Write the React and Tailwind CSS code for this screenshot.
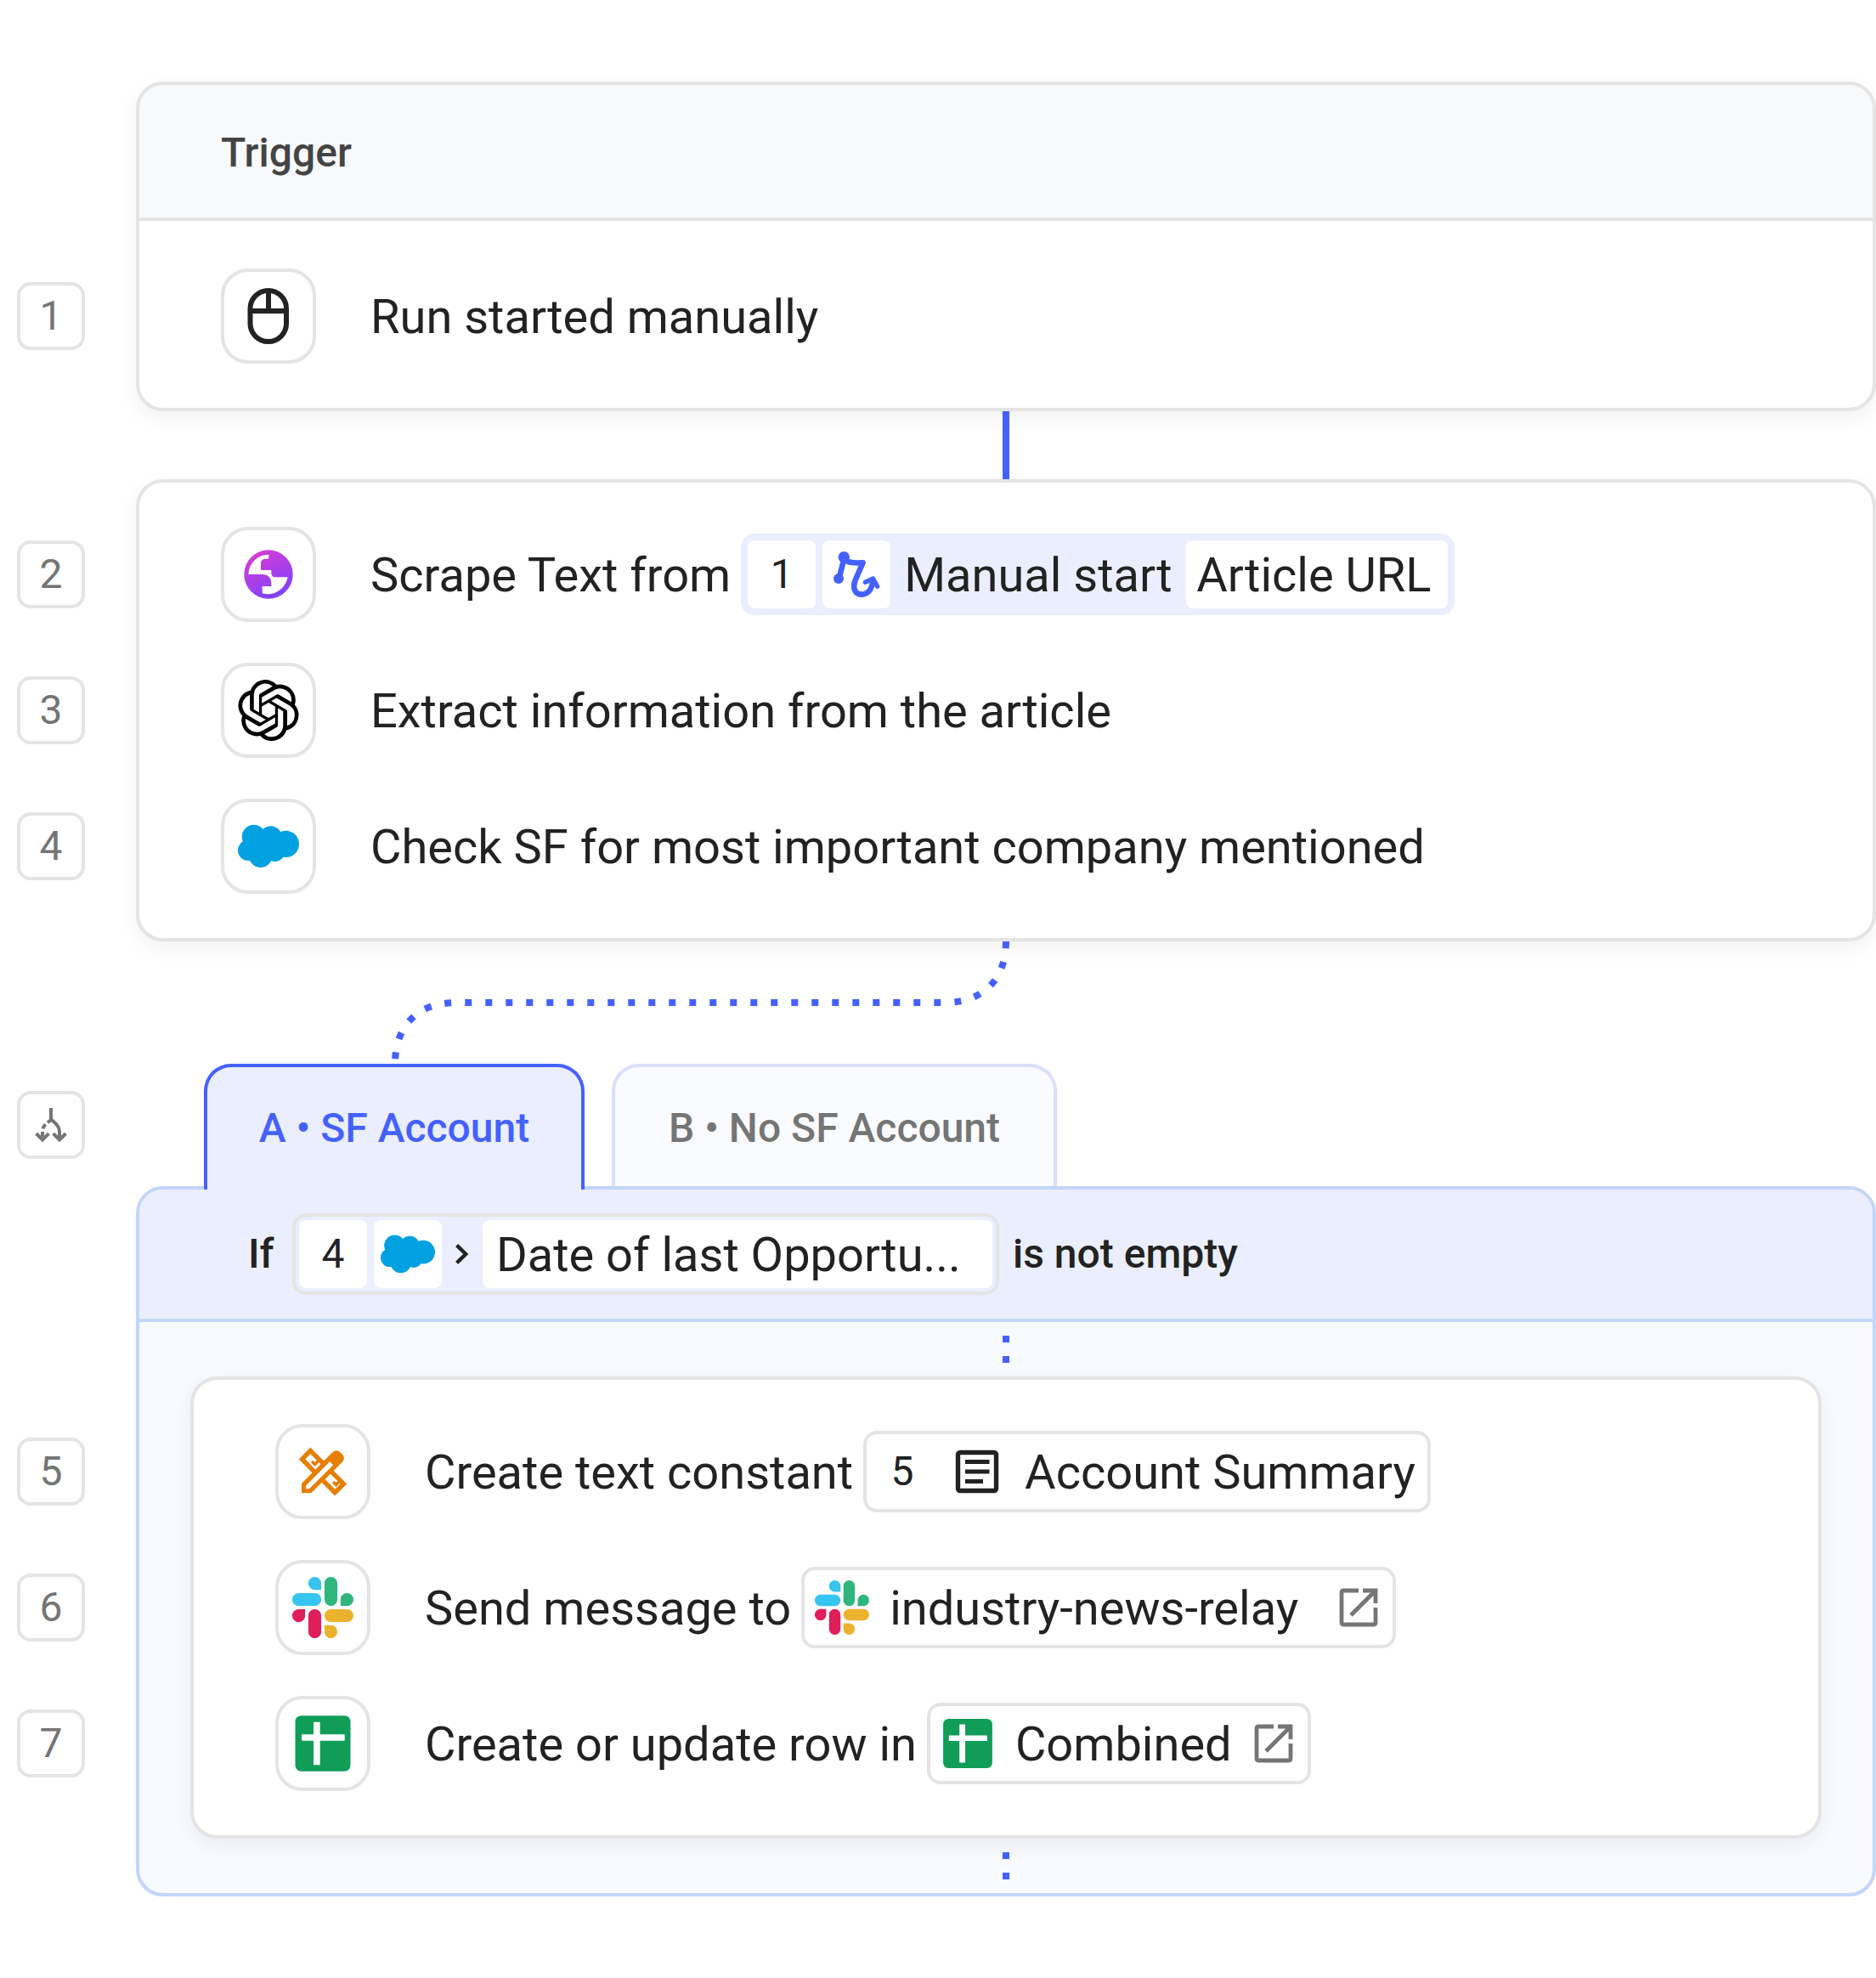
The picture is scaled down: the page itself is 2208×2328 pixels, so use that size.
import { SiOpenai } from "react-icons/si";

function MouseIcon() {
  return (
    <svg viewBox="0 0 72 72" className="size-18" fill="none" stroke="#222222" strokeWidth="6">
      <rect x="14.5" y="6" width="42.5" height="60" rx="21.25" />
      <path d="M14.5 30h42.5M36 6v24" />
    </svg>
  )
}

function GlobeIcon() {
  return (
    <svg viewBox="0 0 72 72" className="size-18">
      <defs>
        <linearGradient id="globe" x1="20" y1="6" x2="50" y2="66" gradientUnits="userSpaceOnUse">
          <stop offset="0" stopColor="#dc3bd3" />
          <stop offset="1" stopColor="#7643ff" />
        </linearGradient>
      </defs>
      <circle cx="36" cy="36" r="28.7" fill="url(#globe)" />
      <path
        fill="#ffffff"
        d="M36.7 12.7A24 24 0 0 0 12.3 36H29C35.5 36 39.3 40.5 39.3 46V50H28.7V58.3A24 24 0 0 0 58.7 39.3H44C41 39.3 39.3 37 39.3 34V31H27V23C27 20 29 17.7 32 17.7H36C36.3 16 36 14.5 36.7 12.7Z"
      />
    </svg>
  )
}

function CloudIcon({ className }) {
  return (
    <svg viewBox="0 0 72 72" className={className} fill="#00a1e0">
      <circle cx="18.7" cy="24.8" r="14" />
      <circle cx="12.2" cy="40.8" r="12.2" />
      <circle cx="26.7" cy="47.4" r="13.6" />
      <circle cx="43.6" cy="42.4" r="11.6" />
      <circle cx="38.6" cy="25.4" r="13.2" />
      <circle cx="56.4" cy="33.4" r="15.6" />
      <path d="M12 26h44v14H12z" />
    </svg>
  )
}

function ToolsIcon() {
  return (
    <svg viewBox="0 0 72 72" className="size-18">
      <path d="M21.3 11.3L11.5 21.5L50.2 60.7L60.4 50.4Z" fill="#ffffff" stroke="#e67e00" strokeWidth="5.4" />
      <path
        d="M32.5 21.5l-6 6-3.4-3.4M57.5 45.5l-6 6-3.4-3.4"
        fill="none"
        stroke="#e67e00"
        strokeWidth="3.6"
      />
      <path
        d="M11 61.3V50L46.6 14Q51.7 9 56.6 13.4L58.8 15.6Q63.4 20.6 58.3 25.3L22.3 61.3Z"
        fill="#e67e00"
      />
      <path d="M16 56.3V52.4L44.2 24.2L48.2 28.2L20 56.3Z" fill="#ffffff" />
    </svg>
  )
}

function SlackIcon({ className }) {
  return (
    <svg viewBox="0 0 122.8 122.8" className={className}>
      <path
        fill="#e01e5a"
        d="M25.8 77.6c0 7.1-5.8 12.9-12.9 12.9S0 84.7 0 77.6s5.8-12.9 12.9-12.9h12.9v12.9zm6.5 0c0-7.1 5.8-12.9 12.9-12.9s12.9 5.8 12.9 12.9v32.3c0 7.1-5.8 12.9-12.9 12.9s-12.9-5.8-12.9-12.9V77.6z"
      />
      <path
        fill="#36c5f0"
        d="M45.2 25.8c-7.1 0-12.9-5.8-12.9-12.9S38.1 0 45.2 0s12.9 5.8 12.9 12.9v12.9H45.2zm0 6.5c7.1 0 12.9 5.8 12.9 12.9s-5.8 12.9-12.9 12.9H12.9C5.8 58.1 0 52.3 0 45.2s5.8-12.9 12.9-12.9h32.3z"
      />
      <path
        fill="#2eb67d"
        d="M97 45.2c0-7.1 5.8-12.9 12.9-12.9s12.9 5.8 12.9 12.9-5.8 12.9-12.9 12.9H97V45.2zm-6.5 0c0 7.1-5.8 12.9-12.9 12.9s-12.9-5.8-12.9-12.9V12.9C64.7 5.8 70.5 0 77.6 0s12.9 5.8 12.9 12.9v32.3z"
      />
      <path
        fill="#ecb22e"
        d="M77.6 97c7.1 0 12.9 5.8 12.9 12.9s-5.8 12.9-12.9 12.9-12.9-5.8-12.9-12.9V97h12.9zm0-6.5c-7.1 0-12.9-5.8-12.9-12.9s5.8-12.9 12.9-12.9h32.3c7.1 0 12.9 5.8 12.9 12.9s-5.8 12.9-12.9 12.9H77.6z"
      />
    </svg>
  )
}

function SheetIcon({ className }) {
  return (
    <svg viewBox="0 0 72 72" className={className}>
      <rect x="3.5" y="3.3" width="65" height="65.4" rx="7" fill="#0f9d58" />
      <path d="M25 10.7h7.7v50.6H25zM11 25.3h50.7v7.4H11z" fill="#ffffff" />
    </svg>
  )
}

function ManualStartIcon() {
  return (
    <svg viewBox="0 0 72 72" className="size-18" fill="none" stroke="#4461ff" strokeWidth="6.6" strokeLinecap="round" strokeLinejoin="round">
      <circle cx="21.3" cy="15.7" r="6.7" fill="#4461ff" stroke="none" />
      <circle cx="15" cy="41" r="6" fill="#4461ff" stroke="none" />
      <path d="M15.5 41L21.3 18C27 23 34 22.6 43.6 22.3L35 42C31 52 34 59.6 42 59.6C50.5 59.6 55 52 55 43" />
      <path d="M46.4 45.2L55.6 41L60.6 50.2" strokeWidth="5.4" />
    </svg>
  )
}

function ListIcon() {
  return (
    <svg viewBox="0 0 64 64" className="size-16" fill="none" stroke="#222222" strokeWidth="5.4">
      <rect x="9.5" y="9.5" width="45" height="45" rx="2.5" />
      <path d="M18 20.5h28.5M18 32h28.5M18 43.5h21" strokeWidth="4.8" />
    </svg>
  )
}

function ExternalIcon() {
  return (
    <svg viewBox="0 0 48 48" className="size-12 shrink-0" fill="none" stroke="#757575" strokeWidth="4.8">
      <path d="M24 4H6.5Q4 4 4 6.5V41.5Q4 44 6.5 44H41.5Q44 44 44 41.5V24" />
      <path d="M29 4H44V19M15 33L44 4" />
    </svg>
  )
}

function BranchIcon() {
  return (
    <svg viewBox="0 0 48 48" className="size-12" fill="none" stroke="#757575" strokeWidth="4">
      <path d="M24 4V16C24 20 34 22 34 32V41" />
      <path d="M28 35.5l6 6 6-6M8 35.5l6 6 6-6" strokeLinecap="square" />
      <path d="M24 18C19.5 22 14 24 14 33V41" strokeDasharray="6 3.5" strokeDashoffset="1" />
    </svg>
  )
}

function StepNumber({ children }) {
  return (
    <div className="flex h-28 items-center">
      <span className="flex size-20 items-center justify-center rounded-2xl border-4 border-[#e4e4e4] text-[48px] leading-none text-[#757575]">
        {children}
      </span>
    </div>
  )
}

function Step({ icon, children }) {
  return (
    <li className="flex items-center gap-16">
      <div className="flex size-28 shrink-0 items-center justify-center rounded-[32px] border-4 border-[#e4e4e4] bg-white">
        {icon}
      </div>
      <div className="flex items-center gap-3 whitespace-nowrap text-[56px] leading-none">{children}</div>
    </li>
  )
}

function Label({ children }) {
  return <span className="pt-0.5">{children}</span>
}

function Cell({ children }) {
  return (
    <span className="flex size-20 shrink-0 items-center justify-center rounded-lg bg-white text-[48px]">
      {children}
    </span>
  )
}

function Card({ children }) {
  return (
    <div className="overflow-hidden rounded-[32px] border-4 border-[#e4e4e4] bg-white shadow-[0_8px_24px_rgba(0,0,0,0.055)]">
      {children}
    </div>
  )
}

function Dots() {
  return (
    <div className="flex h-16 flex-col items-center gap-4 pt-4">
      <span className="size-2 bg-[#4461ff]" />
      <span className="size-2 bg-[#4461ff]" />
    </div>
  )
}

export default function App() {
  return (
    <main className="bg-white pt-24 pb-24 font-['Roboto',sans-serif] text-[#222222]">
      {/* Trigger */}
      <section className="flex">
        <div className="w-40 shrink-0 pt-[220px] pl-5">
          <StepNumber>1</StepNumber>
        </div>
        <div className="flex-1">
          <Card>
            <h2 className="flex h-40 items-center border-b-4 border-[#e4e4e4] bg-[#f8f9fb] px-24 pt-1 text-[48px] leading-none font-medium text-[#444444]">
              Trigger
            </h2>
            <ul className="px-24 pt-14 pb-[52px]">
              <Step icon={<MouseIcon />}>
                <Label>Run started manually</Label>
              </Step>
            </ul>
          </Card>
          <div className="mx-auto h-20 w-2 bg-[#4461ff]" />
        </div>
      </section>

      {/* Actions */}
      <section className="flex">
        <div className="flex w-40 shrink-0 flex-col gap-12 pt-14 pl-5">
          <StepNumber>2</StepNumber>
          <StepNumber>3</StepNumber>
          <StepNumber>4</StepNumber>
        </div>
        <div className="flex-1">
          <Card>
            <ul className="flex flex-col gap-12 px-24 py-[52px]">
              <Step icon={<GlobeIcon />}>
                <Label>Scrape Text from</Label>
                <span className="flex items-center gap-2 rounded-2xl bg-[#ebeefe] p-2">
                  <Cell>1</Cell>
                  <Cell><ManualStartIcon /></Cell>
                  <span className="min-w-[332px] px-2 pt-0.5">Manual start</span>
                  <span className="flex h-20 min-w-[308px] items-center rounded-lg bg-white px-3 pt-0.5">Article URL</span>
                </span>
              </Step>
              <Step icon={<SiOpenai className="size-18 text-black" />}>
                <Label>Extract information from the article</Label>
              </Step>
              <Step icon={<CloudIcon className="size-18" />}>
                <Label>Check SF for most important company mentioned</Label>
              </Step>
            </ul>
          </Card>
          <svg viewBox="0 0 2048 144" className="block w-full" fill="none" stroke="#4461ff" strokeWidth="8" strokeDasharray="8 16">
            <path d="M1024 0C1024 45 997 72 952 72H377C332 72 305 99 305 144" />
          </svg>
        </div>
      </section>

      {/* Branches */}
      <section className="flex">
        <div className="w-40 shrink-0 pl-5">
          <div className="flex h-36 items-center">
            <span className="flex size-20 items-center justify-center rounded-2xl border-4 border-[#e4e4e4]">
              <BranchIcon />
            </span>
          </div>
          <div className="flex flex-col gap-12 pt-[280px]">
            <StepNumber>5</StepNumber>
            <StepNumber>6</StepNumber>
            <StepNumber>7</StepNumber>
          </div>
        </div>
        <div className="flex-1">
          <div role="tablist" className="flex h-36 gap-8 pl-20 text-[48px] leading-none font-medium">
            <button
              type="button"
              role="tab"
              aria-selected="true"
              className="relative z-10 -mb-1 min-w-[448px] rounded-t-[32px] border-4 border-b-0 border-[#4461ff] bg-[#ebeefe] text-[#4461ff]"
            >
              A • SF Account
            </button>
            <button
              type="button"
              role="tab"
              aria-selected="false"
              className="min-w-[524px] rounded-t-[32px] border-4 border-b-0 border-[#d9dfff] bg-[#fafbff] pt-1 text-[#757575]"
            >
              B • No SF Account
            </button>
          </div>
          <div className="overflow-hidden rounded-[32px] border-4 border-[#c3d5fa] bg-[#f7faff]">
            <div className="flex h-39 items-center gap-4 border-b-4 border-[#c3d5fa] bg-[#ebeefe] px-32 text-[48px] leading-none font-medium whitespace-nowrap">
              <span className="w-9">If</span>
              <span className="flex items-center gap-2 rounded-2xl border-4 border-[#e4e4e4] p-1 font-normal">
                <Cell>4</Cell>
                <Cell><CloudIcon className="size-16" /></Cell>
                <svg viewBox="0 0 32 32" className="size-8" fill="none" stroke="#222222" strokeWidth="4.4">
                  <path d="M9.6 5.6L20.2 16L9.6 26.4" />
                </svg>
                <span className="flex h-20 min-w-[600px] items-center rounded-lg bg-white px-4 pt-0.5 text-[56px]">
                  Date of last Opportu...
                </span>
              </span>
              <span>is not empty</span>
            </div>
            <div className="px-15">
              <Dots />
              <Card>
                <ul className="flex flex-col gap-12 px-24 py-[52px]">
                  <Step icon={<ToolsIcon />}>
                    <Label>Create text constant</Label>
                    <span className="flex min-w-[668px] items-center gap-2 rounded-2xl border-4 border-[#e4e4e4] px-0.5 py-1">
                      <Cell>5</Cell>
                      <Cell><ListIcon /></Cell>
                      <span className="px-2 pt-0.5">Account Summary</span>
                    </span>
                  </Step>
                  <Step icon={<SlackIcon className="size-18" />}>
                    <Label>Send message to</Label>
                    <a href="#slack" className="flex min-w-[700px] items-center gap-4 rounded-2xl border-4 border-[#e4e4e4] p-1 pr-4">
                      <Cell><SlackIcon className="size-16" /></Cell>
                      <span className="flex-1 pt-0.5">industry-news-relay</span>
                      <ExternalIcon />
                    </a>
                  </Step>
                  <Step icon={<SheetIcon className="size-18" />}>
                    <Label>Create or update row in</Label>
                    <a href="#sheet" className="flex min-w-[452px] items-center gap-4 rounded-2xl border-4 border-[#e4e4e4] p-1 pr-4">
                      <Cell><SheetIcon className="size-16" /></Cell>
                      <span className="flex-1 pt-0.5">Combined</span>
                      <ExternalIcon />
                    </a>
                  </Step>
                </ul>
              </Card>
              <Dots />
            </div>
          </div>
        </div>
      </section>
    </main>
  )
}
